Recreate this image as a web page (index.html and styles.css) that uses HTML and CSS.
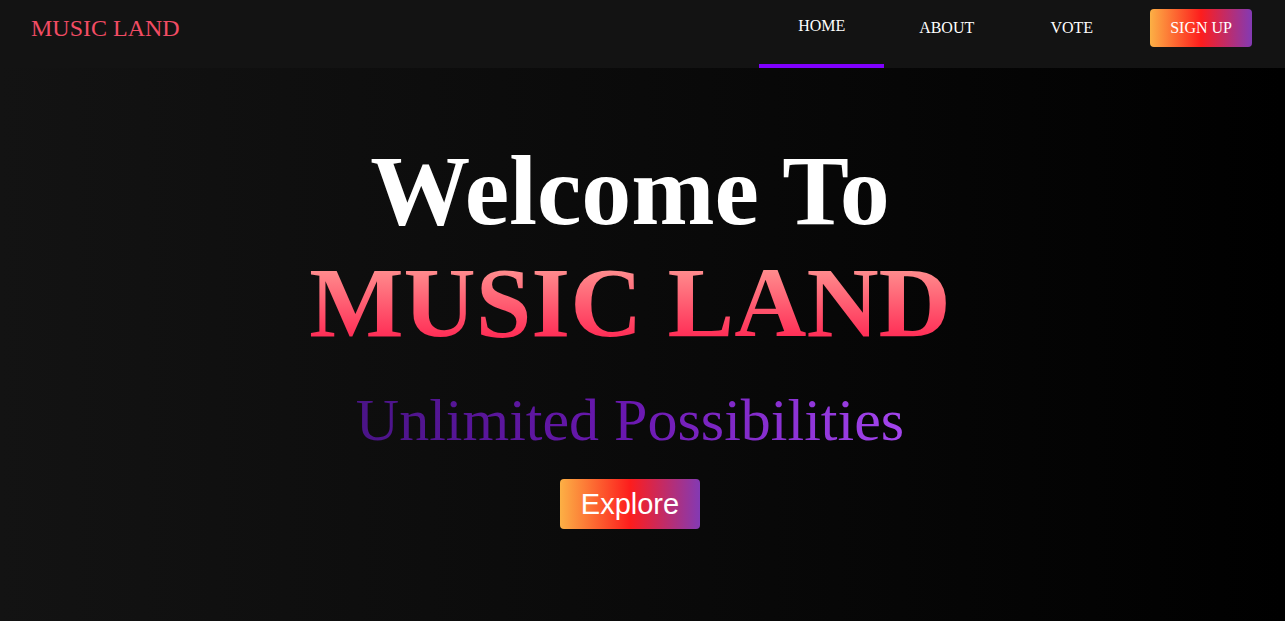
FILE: index.html
```html
<!DOCTYPE html>
<html lang="en">
<head>
<meta charset="utf-8">
<title>Music Land</title>
<link rel="stylesheet" href="styles.css">
</head>
<body>
<header class="nav">
  <div class="logo">MUSIC LAND</div>
  <ul class="menu">
    <li><a class="menu-link active" href="#">HOME</a></li>
    <li><a class="menu-link" href="#">ABOUT</a></li>
    <li><a class="menu-link" href="#">VOTE</a></li>
  </ul>
  <a class="signup" href="#">SIGN UP</a>
</header>
<main class="hero">
  <h1 class="welcome">Welcome To</h1>
  <h2 class="brand">MUSIC LAND</h2>
  <p class="tagline"><span class="tagline-text">Unlimited Possibilities</span></p>
  <a class="explore" href="#">Explore</a>
</main>
</body>
</html>
```
FILE: styles.css
```css
* { box-sizing: border-box; }
html, body { margin: 0; padding: 0; }
body {
  font-family: "Liberation Serif", "Times New Roman", serif;
  background: linear-gradient(to right, #131313 0%, #0a0a0a 50%, #000 100%);
  min-height: 621px;
  color: #fff;
}
.nav {
  display: flex;
  align-items: flex-start;
  height: 68px;
  background: #131313;
}
.logo {
  padding: 14px 0 0 31px;
  font-size: 24px;
  line-height: 28px;
  color: #f24c64;
}
.menu {
  display: flex;
  list-style: none;
  margin: 0 0 0 auto;
  padding: 0;
}
.menu-link {
  display: block;
  width: 125px;
  height: 68px;
  padding-top: 18px;
  text-align: center;
  font-size: 16px;
  line-height: 20px;
  color: #fff;
  text-decoration: none;
}
.menu-link.active {
  padding-top: 16px;
  border-bottom: 4px solid #8000ff;
}
.signup {
  margin: 9px 33px 0 16px;
  padding: 9px 20px;
  font-size: 16px;
  line-height: 20px;
  color: #fff;
  text-decoration: none;
  border-radius: 4px;
  background: linear-gradient(to right, #fcb045, #fd1d1d, #833ab4);
}
.hero {
  padding: 73px 25px 0 0;
  text-align: center;
}
.welcome {
  margin: 0;
  font-size: 100px;
  line-height: 100px;
  font-weight: bold;
  color: #fff;
}
.brand {
  margin: 12px 0 0;
  font-size: 100px;
  line-height: 100px;
  font-weight: bold;
  background: linear-gradient(to bottom, #ff8f8f 15%, #ff2c55 85%);
  -webkit-background-clip: text;
  background-clip: text;
  color: transparent;
  display: inline-block;
}
.tagline {
  margin: 37px 0 0;
  font-size: 60px;
  line-height: 60px;
}
.tagline-text {
  display: inline-block;
  background: linear-gradient(to right, #4a1487, #6a18b0 50%, #a445ee);
  -webkit-background-clip: text;
  background-clip: text;
  color: transparent;
}
.explore {
  display: inline-flex;
  align-items: center;
  justify-content: center;
  margin-top: 29px;
  height: 50px;
  padding: 0 21px;
  font-family: "Liberation Sans", Arial, sans-serif;
  font-size: 29px;
  color: #fff;
  text-decoration: none;
  border-radius: 4px;
  background: linear-gradient(to right, #fcb045, #fd1d1d, #833ab4);
}
```
